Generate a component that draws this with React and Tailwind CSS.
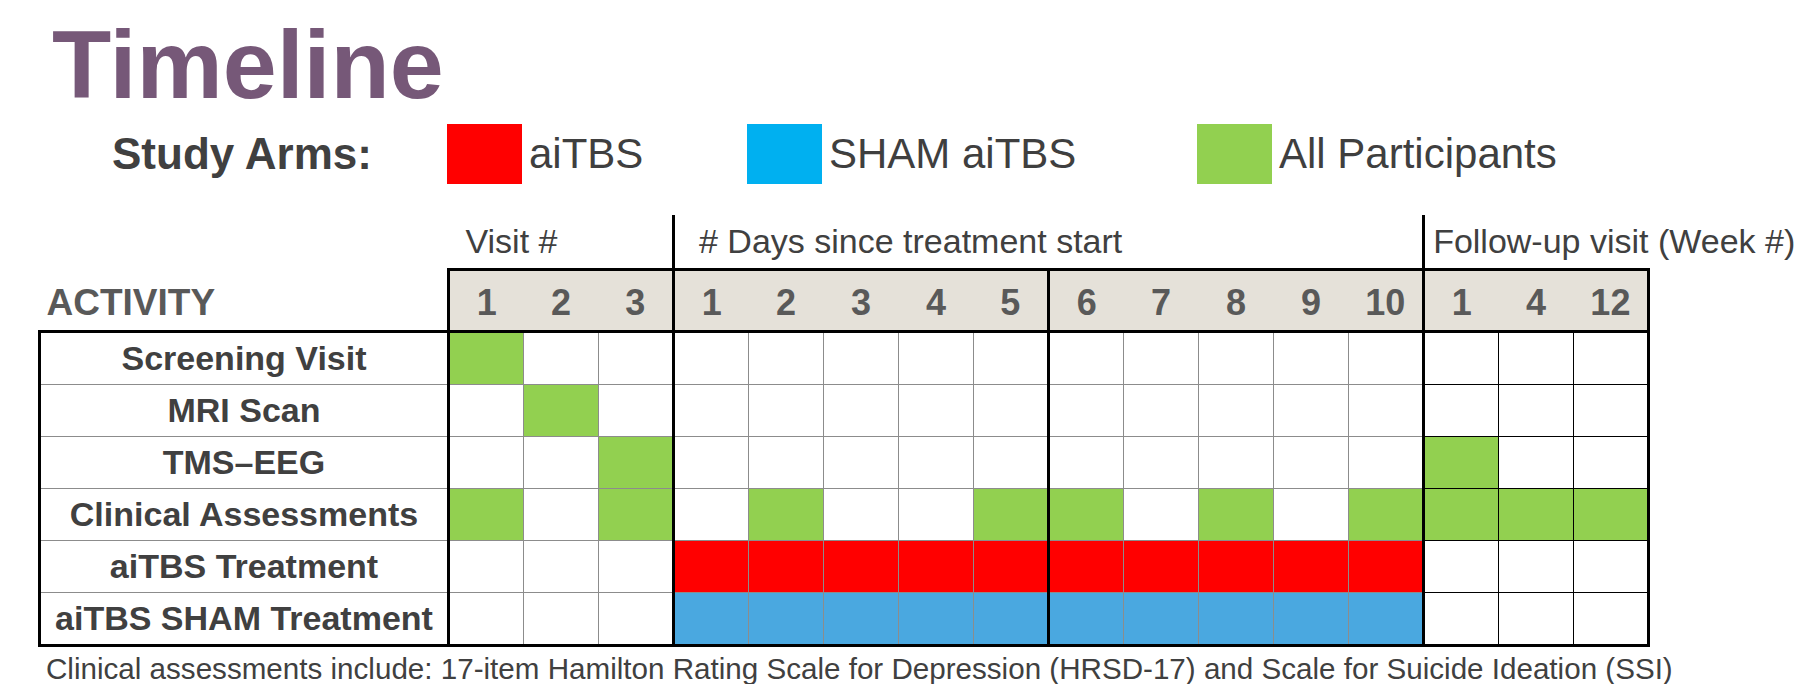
import React from 'react'

const G = 'bg-[#92d050]'
const R = 'bg-[#ff0000]'
const B = 'bg-[#4aa8e0]'

// 16 columns: 3 visits, 10 days, 3 follow-up weeks
const headers = ['1', '2', '3', '1', '2', '3', '4', '5', '6', '7', '8', '9', '10', '1', '4', '12']

const rows = [
  { label: 'Screening Visit', fill: { 0: G } },
  { label: 'MRI Scan', fill: { 1: G } },
  { label: 'TMS\u2013EEG', fill: { 2: G, 13: G } },
  { label: 'Clinical Assessments', fill: { 0: G, 2: G, 4: G, 7: G, 8: G, 10: G, 12: G, 13: G, 14: G, 15: G } },
  { label: 'aiTBS Treatment', fill: Object.fromEntries([3, 4, 5, 6, 7, 8, 9, 10, 11, 12].map((i) => [i, R])) },
  { label: 'aiTBS SHAM Treatment', fill: Object.fromEntries([3, 4, 5, 6, 7, 8, 9, 10, 11, 12].map((i) => [i, B])) },
]

const thick = [2, 7, 12, 15]

const headCellClass = (i) => {
  let c = 'bg-[#e5e1d9] border-t-[3px] border-b-[3px] border-black text-center align-middle font-bold text-[36px] leading-none text-[#595959] pt-[5px]'
  if (i === 0) c += ' border-l-[3px]'
  if (thick.includes(i)) c += ' border-r-[3px]'
  return c
}

const bodyCellClass = (i, last) => {
  const followUp = i >= 13
  let c = 'h-[52px] p-0 '
  c += followUp ? 'border border-black' : 'border border-[#8c8c8c]'
  if (thick.includes(i)) c += ' border-r-[3px] border-r-black'
  if (i === 3) c += ' border-l-[3px] border-l-black'
  if (last) c += ' border-b-[3px] border-b-black'
  return c
}

const LegendItem = ({ color, label, width }) => (
  <div className={`flex items-center ${width}`}>
    <div className={`w-[75px] h-[60px] ${color}`} />
    <span className="ml-[7px] text-[42px] leading-none text-[#3f3f3f]">{label}</span>
  </div>
)

export default function App() {
  return (
    <div className="w-[1811px] h-[684px] bg-white overflow-hidden font-['Liberation_Sans',Arial,sans-serif]">
      {/* Title */}
      <div className="pt-[16px] pl-[52px]">
        <h1 className="text-[97px] leading-none font-bold text-[#765878]">Timeline</h1>
      </div>

      {/* Legend */}
      <div className="mt-[11px] flex items-center h-[60px] pl-[112px]">
        <div className="w-[335px] text-[44px] font-bold text-[#404040] leading-none">Study Arms:</div>
        <LegendItem color="bg-[#ff0000]" label="aiTBS" width="w-[300px]" />
        <LegendItem color="bg-[#00b0f0]" label="SHAM aiTBS" width="w-[450px]" />
        <LegendItem color="bg-[#92d050]" label="All Participants" width="" />
      </div>

      {/* Table */}
      <div className="mt-[31px] pl-[38px]">
        <table className="border-collapse table-fixed w-[1609px]">
          <colgroup>
            <col className="w-[409px]" />
            {headers.map((_, i) => (
              <col key={i} className="w-[75px]" />
            ))}
          </colgroup>
          <thead>
            <tr className="h-[54px]">
              <th className="p-0" />
              <th colSpan={3} className="p-0 pl-[17px] text-left font-normal text-[34px] text-[#404040] whitespace-nowrap">
                Visit #
              </th>
              <th colSpan={10} className="p-0 pl-[24px] text-left font-normal text-[34px] text-[#404040] whitespace-nowrap border-l-[3px] border-black">
                # Days since treatment start
              </th>
              <th colSpan={3} className="p-0 pl-[8px] text-left font-normal text-[34px] text-[#404040] whitespace-nowrap border-l-[3px] border-black">
                Follow-up visit (Week #)
              </th>
            </tr>
            <tr className="h-[62px]">
              <th className="p-0 pl-[7px] pt-[7px] text-left font-bold text-[37px] leading-none text-[#595959] border-b-[3px] border-black align-middle">
                ACTIVITY
              </th>
              {headers.map((h, i) => (
                <th key={i} className={`p-0 ${headCellClass(i)}`}>
                  {h}
                </th>
              ))}
            </tr>
          </thead>
          <tbody>
            {rows.map((row, r) => {
              const last = r === rows.length - 1
              return (
                <tr key={r}>
                  <td
                    className={`h-[52px] p-0 text-center font-bold text-[34px] text-[#404040] whitespace-nowrap border-l-[3px] border-r-[3px] border-black border-b ${
                      last ? 'border-b-[3px] border-b-black' : 'border-b-[#8c8c8c]'
                    }`}
                  >
                    {row.label}
                  </td>
                  {headers.map((_, i) => (
                    <td key={i} className={`${bodyCellClass(i, last)} ${row.fill[i] || ''}`} />
                  ))}
                </tr>
              )
            })}
          </tbody>
        </table>
      </div>

      {/* Footnote */}
      <p className="mt-[5px] pl-[46px] text-[29.6px] leading-[34px] text-[#404040] whitespace-nowrap">
        Clinical assessments include: 17-item Hamilton Rating Scale for Depression (HRSD-17) and Scale for Suicide Ideation (SSI)
      </p>
    </div>
  )
}
